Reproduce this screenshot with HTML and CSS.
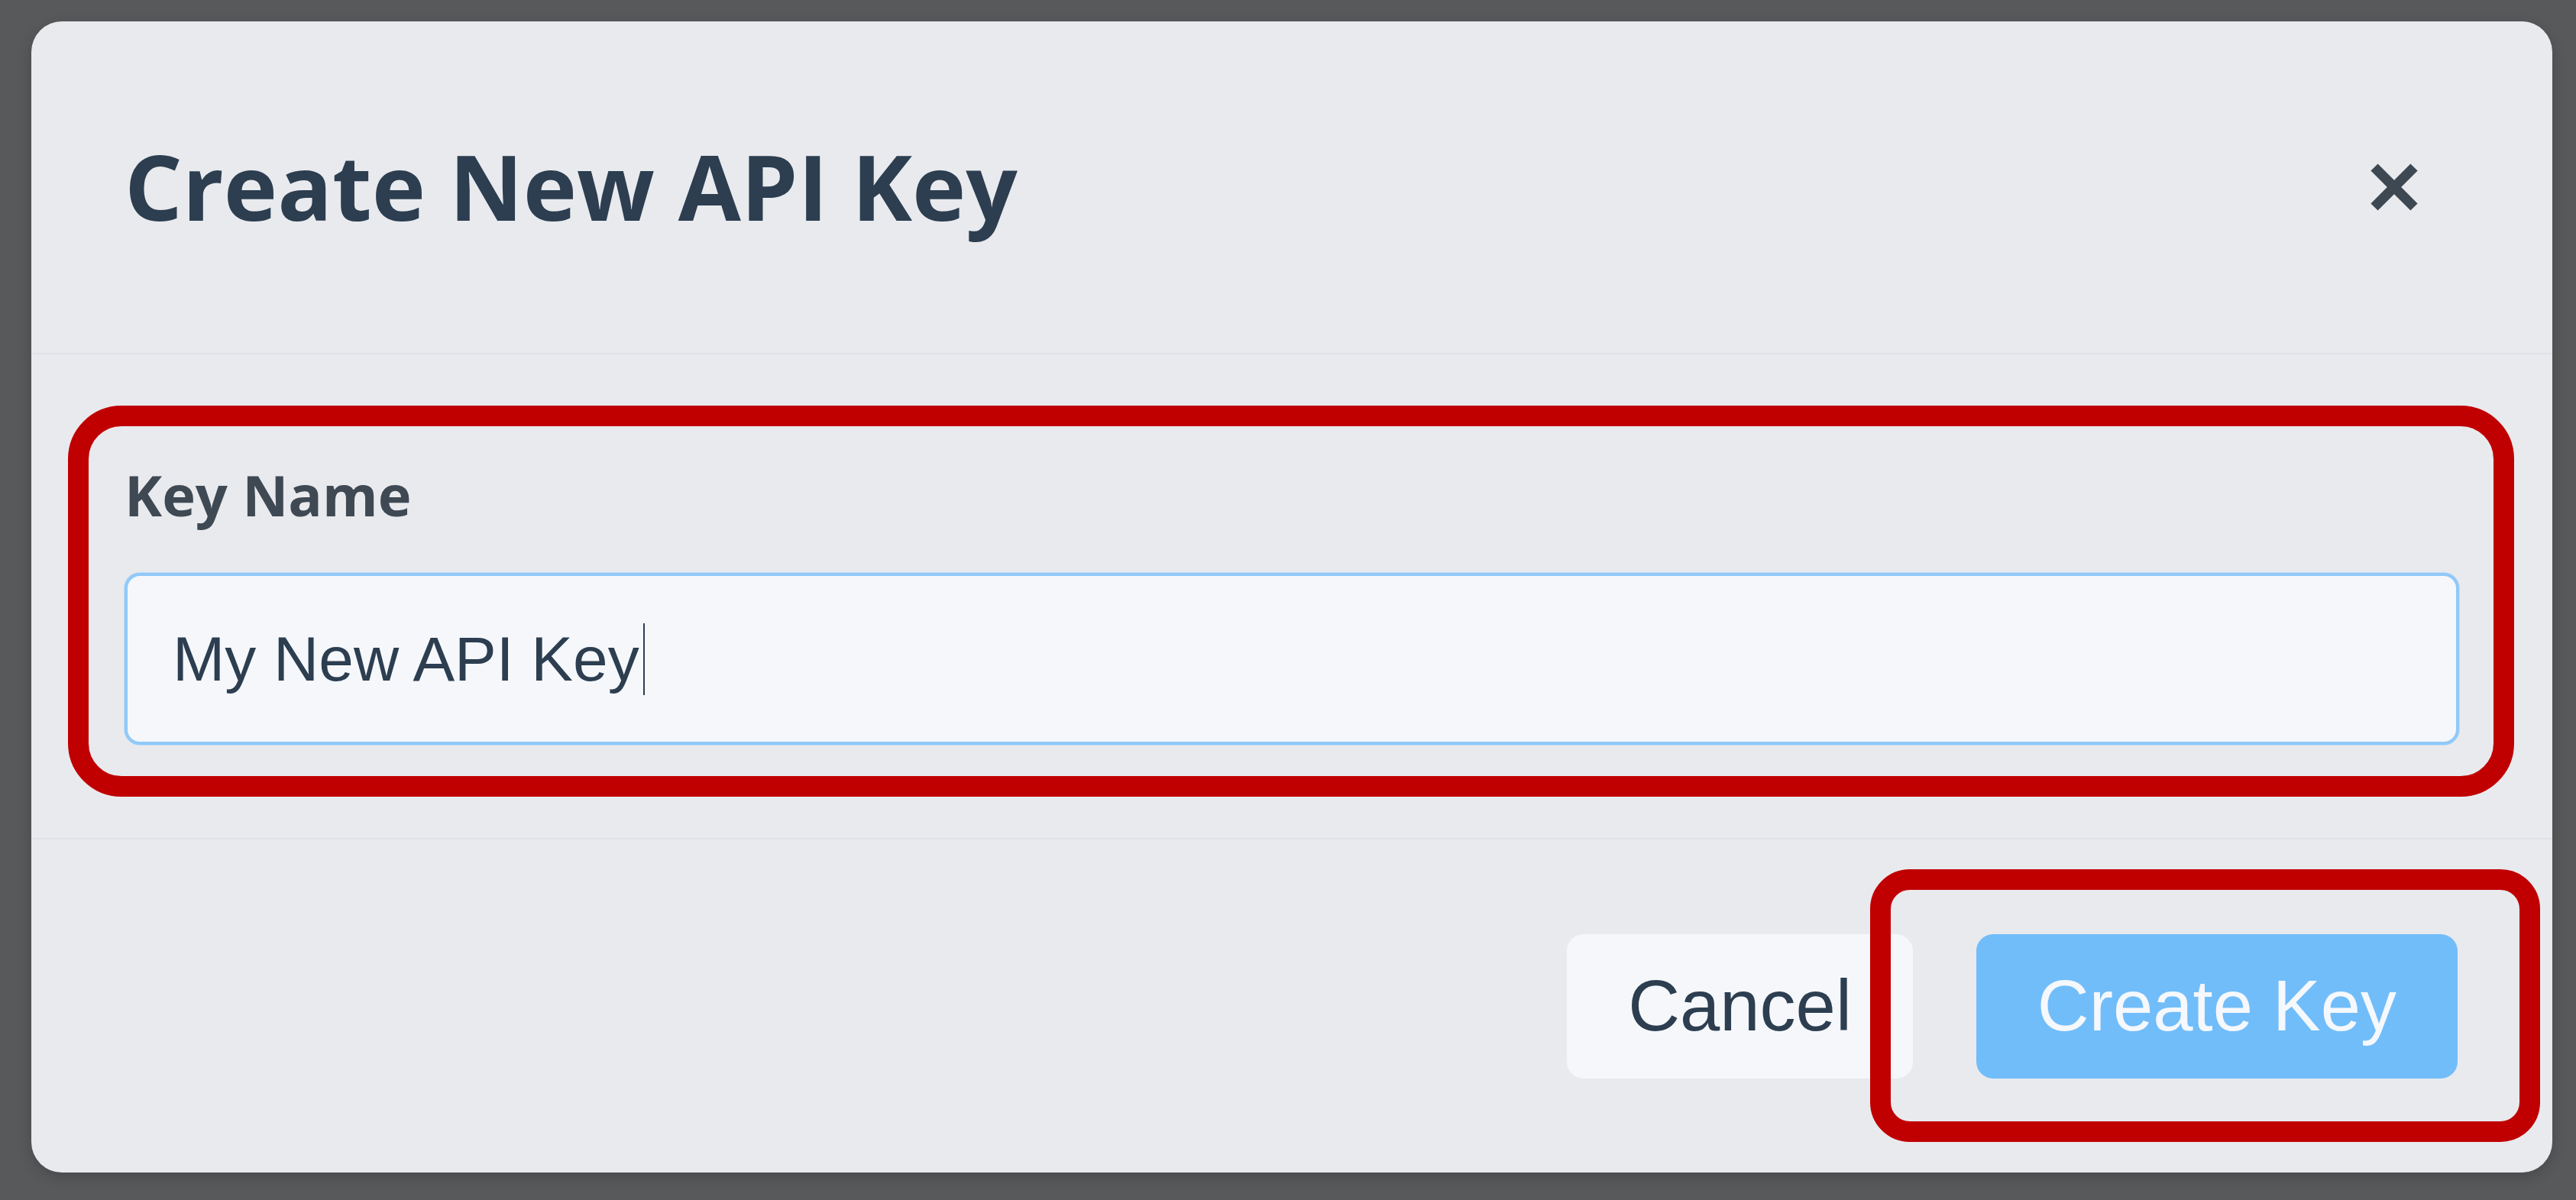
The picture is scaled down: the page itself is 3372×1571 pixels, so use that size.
FILE: index.html
```html
<!DOCTYPE html>
<html lang="en">
<head>
<meta charset="utf-8">
<title>Create New API Key</title>
<link rel="stylesheet" href="styles.css">
</head>
<body>
<div class="backdrop">
  <div class="dialog" role="dialog" aria-labelledby="dlg-title">
    <div class="dialog-header">
      <h2 class="dialog-title" id="dlg-title">Create New API Key</h2>
      <button class="close-btn" type="button" aria-label="Close">
        <svg width="64" height="64" viewBox="0 0 64 64" aria-hidden="true">
          <line x1="6" y1="6" x2="58" y2="58" stroke="#3d4852" stroke-width="13"/>
          <line x1="58" y1="6" x2="6" y2="58" stroke="#3d4852" stroke-width="13"/>
        </svg>
      </button>
    </div>
    <div class="dialog-body">
      <div class="form-group highlight-wide">
        <label class="field-label">Key Name</label>
        <div class="text-input" role="textbox"><span class="input-value">My New API Key</span><span class="caret"></span></div>
      </div>
    </div>
    <div class="dialog-footer">
      <button class="btn btn-secondary" type="button">Cancel</button>
      <div class="highlight-btn">
        <button class="btn btn-primary" type="button">Create Key</button>
      </div>
    </div>
  </div>
</div>
</body>
</html>
```

FILE: styles.css
```css
* { box-sizing: border-box; }

html, body {
  margin: 0;
  padding: 0;
  background: #58595b;
}

.backdrop {
  width: 3372px;
  height: 1571px;
  padding: 28px 31px 36px 41px;
}

.dialog {
  width: 3300px;
  height: 1507px;
  background: #e9eaee;
  border-radius: 40px;
  box-shadow: 0 6px 18px rgba(0, 0, 0, 0.18);
  display: flex;
  flex-direction: column;
}

.dialog-header {
  height: 436px;
  flex: none;
  display: flex;
  align-items: center;
  justify-content: space-between;
  padding: 0 122px;
  border-bottom: 2px solid #dfe2e7;
}

.dialog-title {
  margin: 0;
  padding-bottom: 3px;
  font-family: "Open Sans", "Noto Sans", sans-serif;
  font-weight: 700;
  font-size: 119px;
  line-height: 1;
  color: #2c3e50;
}

.close-btn {
  width: 100px;
  height: 100px;
  margin-right: 35px;
  padding: 0;
  border: 0;
  background: transparent;
  display: flex;
  align-items: center;
  justify-content: center;
}

.dialog-body {
  height: 633px;
  flex: none;
  padding: 146px 122px 122px;
}

.form-group {
  position: relative;
  display: flex;
  flex-direction: column;
}

.field-label {
  font-family: "Open Sans", "Noto Sans", sans-serif;
  font-weight: 700;
  font-size: 74px;
  line-height: 76px;
  color: #3f4954;
  margin-bottom: 64px;
}

.text-input {
  height: 225px;
  display: flex;
  align-items: center;
  padding: 0 59px;
  background: #f5f7fb;
  border: 4px solid #90c9f9;
  box-shadow: 0 0 0 1px rgba(144, 201, 249, 0.45);
  border-radius: 20px;
  font-family: "Liberation Sans", Arial, sans-serif;
  font-size: 82px;
  line-height: 1;
  color: #2c3e50;
}

.caret {
  display: inline-block;
  width: 2px;
  height: 94px;
  margin-left: 5px;
  background: #2c3e50;
}

.dialog-footer {
  flex: 1;
  display: flex;
  align-items: center;
  justify-content: flex-end;
  gap: 83px;
  padding: 0 124px;
  border-top: 2px solid #dfe2e7;
}

.btn {
  height: 189px;
  padding: 0 80px;
  border: 0;
  border-radius: 22px;
  font-family: "Liberation Sans", Arial, sans-serif;
  font-size: 94px;
  line-height: 1;
}

.btn-secondary {
  background: #f5f7fa;
  color: #2c3e50;
}

.btn-primary {
  background: #71bdfa;
  color: #f5f8fc;
}

.highlight-btn {
  position: relative;
  display: flex;
}

/* red annotation outlines drawn over the content */
.highlight-wide::after,
.highlight-btn::after {
  content: "";
  position: absolute;
  border: 27px solid #c00000;
  pointer-events: none;
}

.highlight-wide::after {
  top: -79px;
  left: -74px;
  right: -72px;
  bottom: -68px;
  border-radius: 70px;
}

.highlight-btn::after {
  top: -85px;
  left: -139px;
  right: -108px;
  bottom: -83px;
  border-radius: 52px;
}
```
